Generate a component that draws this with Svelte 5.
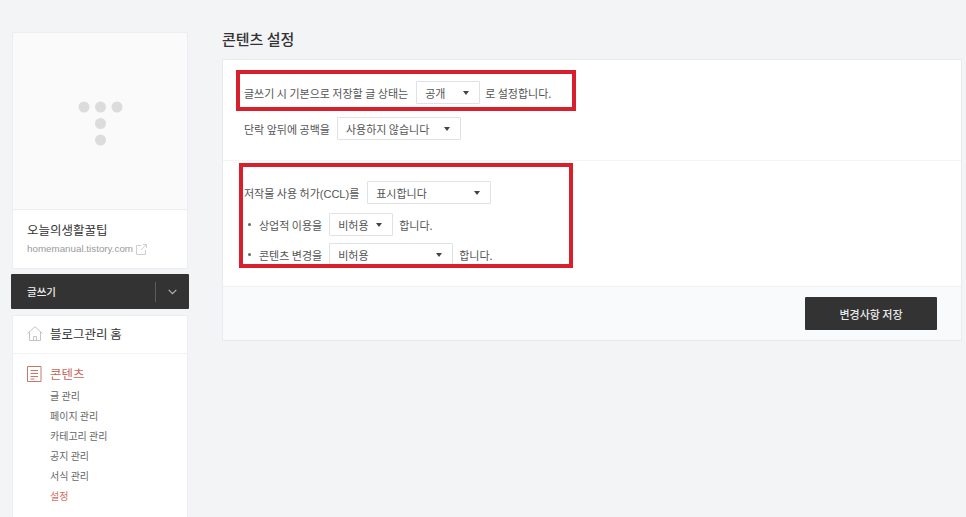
<script>
  const subMenu = [
    { label: "글 관리" },
    { label: "페이지 관리" },
    { label: "카테고리 관리" },
    { label: "공지 관리" },
    { label: "서식 관리" },
    { label: "설정", active: true }
  ];
</script>

<div class="page">
  <aside class="side">
    <div class="card">
      <div class="thumb">
        <svg width="45" height="45" viewBox="0 0 45 45" fill="#dcdcdc">
          <circle cx="6" cy="6" r="5.500" />
          <circle cx="22.500" cy="6" r="5.500" />
          <circle cx="39" cy="6" r="5.500" />
          <circle cx="22.500" cy="22.500" r="5.500" />
          <circle cx="22.500" cy="39" r="5.500" />
        </svg>
      </div>
      <div class="profile">
        <div class="blog-name">오늘의생활꿀팁</div>
        <div class="blog-url">
          homemanual.tistory.com
          <svg width="11" height="11" viewBox="0 0 11 11" fill="none" stroke="#cfcfcf">
            <path d="M5 1.500H.5v9h9V6M5 6l5.500-5.500M7 .5h3.500V4" />
          </svg>
        </div>
      </div>
    </div>

    <div class="write">
      <span class="write-label">글쓰기</span>
      <span class="write-more">
        <svg width="9" height="6" viewBox="0 0 9 6" fill="none" stroke="#b5b5b5" stroke-width="1.2">
          <path d="M.7.8l3.800 3.800L8.300.8" />
        </svg>
      </span>
    </div>

    <nav class="card menu">
      <div class="home">
        <svg width="16" height="15" viewBox="0 0 16 15" fill="none" stroke="#c4c4c4">
          <path d="M.5 7.500L8 .8l7.500 6.700M2.500 6v8.500h11V6M6.500 14.500v-4h3v4" />
        </svg>
        블로그관리 홈
      </div>
      <div class="group">
        <div class="group-title">
          <svg width="15" height="16" viewBox="0 0 15 16" fill="none" stroke="#c9776a">
            <path d="M.5.500h13.500v15H.5zM3.500 4.500h7.500M3.500 7.500h7.500M3.500 10.500h7.500M3.500 13h4" />
          </svg>
          콘텐츠
        </div>
        <ul>
          {#each subMenu as item}
            <li class:active={item.active}>{item.label}</li>
          {/each}
        </ul>
      </div>
    </nav>
  </aside>

  <main class="main">
    <h1>콘텐츠 설정</h1>
    <div class="panel">
      <section class="first">
        <div class="row">
          <span>글쓰기 시 기본으로 저장할 글 상태는</span>
          <span class="select w64 wide">공개<i></i></span>
          <span>로 설정합니다.</span>
        </div>
        <div class="row">
          <span>단락 앞뒤에 공백을</span>
          <span class="select w124">사용하지 않습니다<i></i></span>
        </div>
      </section>
      <section class="second">
        <div class="row">
          <span>저작물 사용 허가<em>(CCL)</em>를</span>
          <span class="select w124 wide">표시합니다<i></i></span>
        </div>
        <div class="row sub">
          <b></b>
          <span>상업적 이용을</span>
          <span class="select w64">비허용<i></i></span>
          <span class="tail">합니다.</span>
        </div>
        <div class="row sub tight">
          <b></b>
          <span>콘텐츠 변경을</span>
          <span class="select w124">비허용<i></i></span>
          <span class="tail">합니다.</span>
        </div>
      </section>
      <div class="foot">
        <button>변경사항 저장</button>
      </div>
      <div class="mark mark-a"></div>
      <div class="mark mark-b"></div>
    </div>
  </main>
</div>

<style>
  :global(body) {
    margin: 0;
    background: #f3f4f6;
    overflow: hidden;
  }
  .page {
    display: flex;
    height: 517px;
    overflow: hidden;
    font-family: "Noto Sans CJK KR", "Liberation Sans", sans-serif;
    color: #555;
  }
  .side {
    width: 178px;
    margin: 32px 0 0 11px;
    flex: none;
  }
  .card {
    margin: 0 1px;
    background: #fff;
    border: 1px solid #eceef1;
    box-sizing: border-box;
  }
  .thumb {
    height: 177px;
    padding-top: 4px;
    background: #fafafa;
    border-bottom: 1px solid #eceef1;
    display: flex;
    align-items: center;
    justify-content: center;
    box-sizing: border-box;
  }
  .profile {
    height: 58px;
    padding: 11px 14px 0;
    box-sizing: border-box;
  }
  .blog-name {
    font-size: 12.5px;
    line-height: 17px;
    color: #333;
  }
  .blog-url {
    margin-top: 4px;
    font-family: "Liberation Sans", sans-serif;
    font-size: 9.8px;
    line-height: 14px;
    color: #9a9a9a;
    display: flex;
    align-items: center;
    gap: 3px;
  }
  .write {
    height: 35px;
    margin: 5px 0 6px;
    padding: 0 0 0 16px;
    background: #333;
    color: #eee;
    font-size: 10.5px;
    font-weight: 500;
    display: flex;
    align-items: center;
    justify-content: space-between;
    border-radius: 1px;
  }
  .write-more {
    width: 33px;
    height: 20px;
    border-left: 1px solid #5c5c5c;
    display: flex;
    align-items: center;
    justify-content: center;
  }
  .menu {
    height: 220px;
  }
  .home {
    height: 37px;
    padding: 0 0 3px 14px;
    border-bottom: 1px solid #f1f2f4;
    display: flex;
    align-items: center;
    gap: 7px;
    font-size: 12.5px;
    color: #333;
    box-sizing: content-box;
    height: 34px;
  }
  .group {
    padding: 10px 0 0 14px;
  }
  .group-title {
    display: flex;
    align-items: center;
    gap: 8px;
    font-size: 12.5px;
    line-height: 20px;
    color: #c9665a;
  }
  ul {
    list-style: none;
    margin: 2px 0 0;
    padding: 0 0 0 23px;
  }
  li {
    font-size: 10px;
    line-height: 20px;
    color: #666;
  }
  li.active {
    color: #d0705f;
  }
  .main {
    width: 740px;
    margin-left: 33px;
    flex: none;
  }
  h1 {
    margin: 0;
    height: 59px;
    padding-top: 28px;
    box-sizing: border-box;
    font-size: 15px;
    font-weight: 500;
    line-height: 22px;
    color: #333;
  }
  .panel {
    position: relative;
    background: #fff;
    border: 1px solid #e8eaee;
    font-size: 11px;
    height: 282px;
    box-sizing: border-box;
  }
  section {
    padding-left: 21px;
    box-sizing: border-box;
  }
  .first {
    height: 101px;
    padding-top: 21px;
    border-bottom: 1px solid #f3f4f6;
  }
  .second {
    height: 125px;
    padding-top: 20px;
  }
  .row {
    display: flex;
    align-items: center;
    gap: 5px;
    height: 23px;
    margin-bottom: 13px;
    white-space: nowrap;
  }
  .row em {
    font-style: normal;
    font-family: "Liberation Sans", sans-serif;
  }
  .second .row {
    margin-bottom: 9px;
  }
  .second .tight {
    margin-top: -2px;
  }
  .sub b {
    width: 3px;
    height: 3px;
    margin: 0 3px 0 4px;
    border-radius: 50%;
    background: #666;
  }
  .tail {
    margin-left: 1px;
  }
  .select {
    position: relative;
    height: 23px;
    margin-left: 2px;
    padding-left: 8px;
    border: 1px solid #dfe1e4;
    box-sizing: border-box;
    display: inline-flex;
    align-items: center;
    background: #fff;
    border-radius: 1px;
  }
  .wide {
    margin-left: 3px;
  }
  .select i {
    position: absolute;
    right: 10px;
    top: 9px;
    border: 3px solid transparent;
    border-top: 4px solid #444;
    border-bottom: 0;
  }
  .w64 {
    width: 64px;
  }
  .w124 {
    width: 124px;
  }
  .foot {
    height: 54px;
    border-top: 1px solid #eef0f2;
    background: #f9fafb;
    padding: 10px 24px 0 0;
    box-sizing: border-box;
    display: flex;
    justify-content: flex-end;
    align-items: flex-start;
  }
  button {
    width: 132px;
    height: 33px;
    padding: 0;
    border: 0;
    border-radius: 1px;
    background: #333;
    color: #e8e8e8;
    font: 500 11px "Noto Sans CJK KR", sans-serif;
  }
  .mark {
    position: absolute;
    border: 4px solid #d8202c;
    box-sizing: border-box;
    pointer-events: none;
  }
  .mark-a {
    left: 13px;
    top: 10px;
    width: 340px;
    height: 41px;
  }
  .mark-b {
    left: 16px;
    top: 103px;
    width: 334px;
    height: 105px;
  }
</style>
